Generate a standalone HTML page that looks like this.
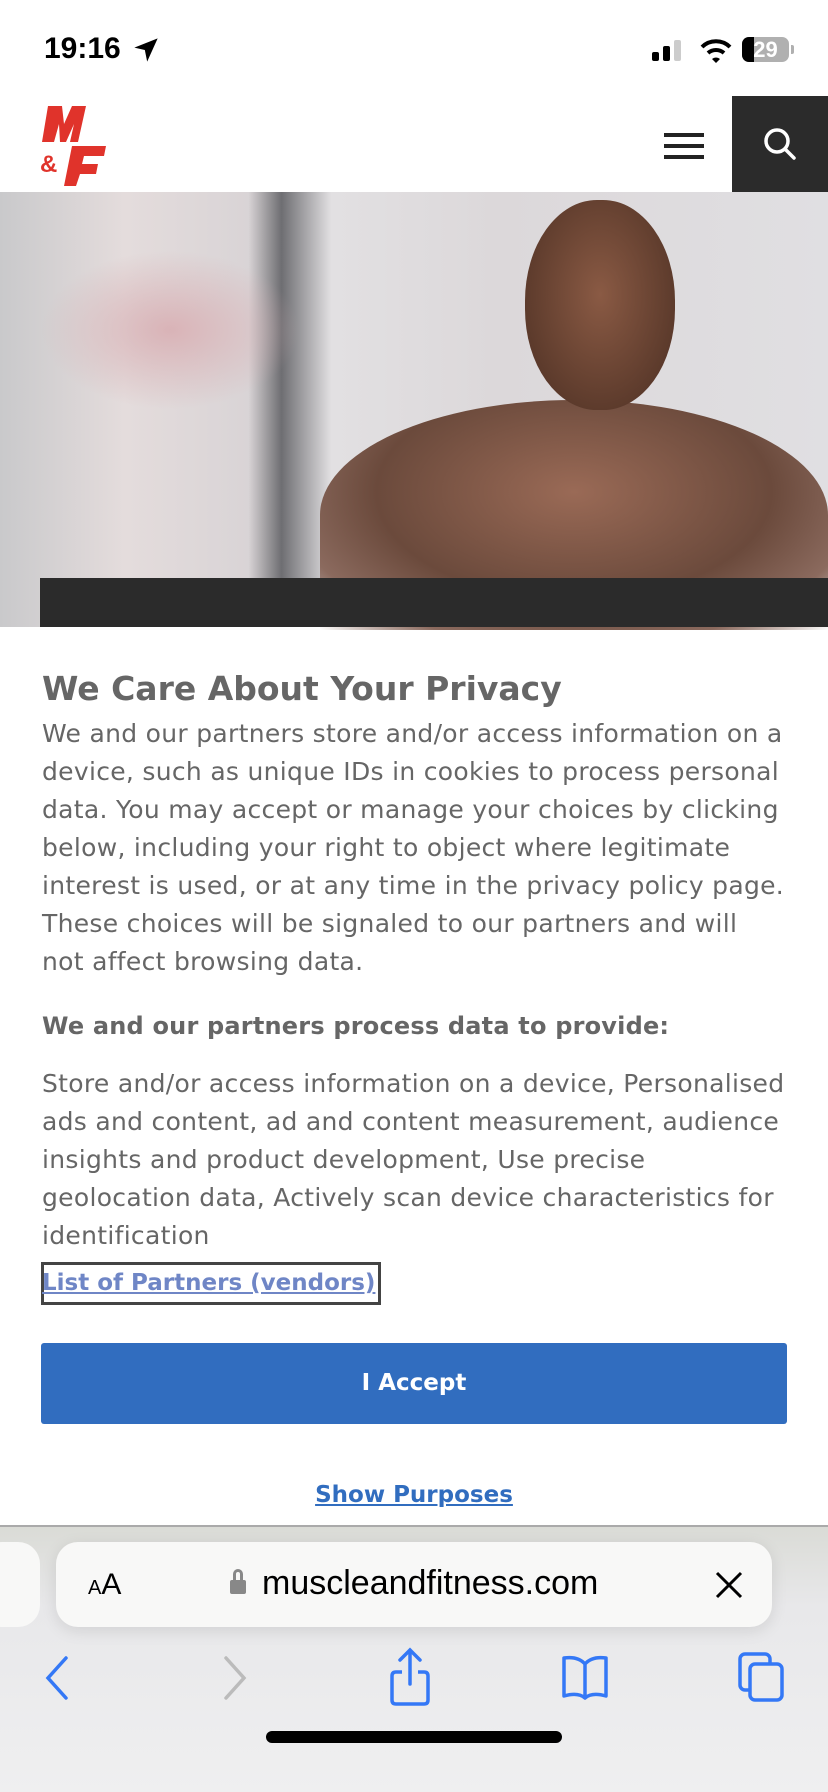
<!DOCTYPE html>
<html><head><meta charset="utf-8"><style>
*{margin:0;padding:0;box-sizing:border-box}
body{width:828px;height:1792px;position:relative;overflow:hidden;background:#fff;font-family:"Liberation Sans",sans-serif}
.abs{position:absolute}
.p{color:#666;font-family:"DejaVu Sans",sans-serif;font-size:25px;letter-spacing:0.3px;line-height:38px;white-space:nowrap}
</style></head><body>
<div class="abs" style="left:44px;top:32px;font-size:30px;font-weight:bold;color:#000">19:16</div>
<svg class="abs" style="left:132px;top:36px" width="28" height="28" viewBox="0 0 24 24"><path d="M22 2 L2 10 L11 12 L13 22 Z" fill="#000"/></svg>
<div class="abs" style="left:652px;top:52px;width:7px;height:9px;background:#000;border-radius:2px"></div>
<div class="abs" style="left:663px;top:46px;width:7px;height:15px;background:#000;border-radius:2px"></div>
<div class="abs" style="left:674px;top:40px;width:7px;height:21px;background:#ccc;border-radius:2px"></div>
<svg class="abs" style="left:700px;top:38px" width="32" height="26" viewBox="0 0 32 26"><path d="M2 9 A20 20 0 0 1 30 9" stroke="#000" stroke-width="4" fill="none"/><path d="M8 15 A12 12 0 0 1 24 15" stroke="#000" stroke-width="4" fill="none"/><path d="M12 21 L16 25 L20 21 A6 6 0 0 0 12 21Z" fill="#000"/></svg>
<div class="abs" style="left:742px;top:37px;width:47px;height:25px;border-radius:7px;background:#b0b0b0;overflow:hidden"><div style="width:12px;height:100%;background:#000"></div><div class="abs" style="left:0;top:0;width:47px;text-align:center;color:#fff;font-weight:bold;font-size:22px;line-height:25px">29</div></div>
<div class="abs" style="left:791px;top:45px;width:3px;height:9px;background:#b0b0b0;border-radius:0 2px 2px 0"></div>

<svg class="abs" style="left:38px;top:104px" width="70" height="82" viewBox="0 0 70 82">
<path d="M10 2 H24 L26 20 L34 2 H48 L40 38 H32 L36 20 L28 38 H22 L21 20 L16 38 H4 Z" fill="#e0332b"/>
<path d="M34 42 H68 L66 52 H46 L44 60 H60 L58 70 H42 L38 82 H26 Z" fill="#e0332b"/>
<text x="2" y="68" font-family="Liberation Sans" font-weight="bold" font-size="24" fill="#e0332b">&amp;</text>
</svg>
<div class="abs" style="left:664px;top:133px;width:40px;height:4px;background:#222"></div>
<div class="abs" style="left:664px;top:144px;width:40px;height:4px;background:#222"></div>
<div class="abs" style="left:664px;top:155px;width:40px;height:4px;background:#222"></div>
<div class="abs" style="left:732px;top:96px;width:96px;height:96px;background:#2b2b2b"></div>
<svg class="abs" style="left:762px;top:126px" width="36" height="36" viewBox="0 0 36 36"><circle cx="15" cy="15" r="11" stroke="#fff" stroke-width="3.5" fill="none"/><path d="M23 23 L32 32" stroke="#fff" stroke-width="3.5" stroke-linecap="round"/></svg>

<div class="abs" style="left:0;top:192px;width:828px;height:435px;background:linear-gradient(90deg,#c9c9cb 0%,#e4dcdc 15%,#d9d4d6 30%,#6e6e72 34%,#e2e0e2 40%,#dcd8da 60%,#e0dfe2 100%)"></div>
<div class="abs" style="left:40px;top:250px;width:260px;height:160px;background:radial-gradient(ellipse,#d9b3b7 0%,rgba(220,200,200,0) 70%)"></div>
<div class="abs" style="left:320px;top:400px;width:508px;height:230px;border-radius:50% 50% 0 0;background:radial-gradient(ellipse at 50% 40%,#9a6a56 0%,#6b4a3c 55%,#8b6a5e 80%,rgba(200,190,190,0) 100%)"></div>
<div class="abs" style="left:525px;top:200px;width:150px;height:210px;border-radius:48%;background:radial-gradient(ellipse at 50% 45%,#8a5a44,#4a2e22)"></div>
<div class="abs" style="left:40px;top:578px;width:788px;height:49px;background:#2b2b2b"></div>

<div class="abs" style="left:42px;top:669px;font-family:'DejaVu Sans',sans-serif;font-size:33px;font-weight:bold;color:#666">We Care About Your Privacy</div>
<div class="abs p" style="left:42px;top:715px">We and our partners store and/or access information on a<br>device, such as unique IDs in cookies to process personal<br>data. You may accept or manage your choices by clicking<br>below, including your right to object where legitimate<br>interest is used, or at any time in the privacy policy page.<br>These choices will be signaled to our partners and will<br>not affect browsing data.</div>
<div class="abs p" style="left:42px;top:1007px;font-weight:bold;font-size:24px;letter-spacing:0.2px">We and our partners process data to provide:</div>
<div class="abs p" style="left:42px;top:1065px">Store and/or access information on a device, Personalised<br>ads and content, ad and content measurement, audience<br>insights and product development, Use precise<br>geolocation data, Actively scan device characteristics for<br>identification</div>
<div class="abs" style="left:41px;top:1262px;width:340px;height:43px;border:3px solid #444"></div>
<div class="abs" style="left:42px;top:1270px;font-family:'DejaVu Sans',sans-serif;font-size:23px;font-weight:bold;color:#6f86c6;text-decoration:underline">List of Partners (vendors)</div>
<div class="abs" style="left:41px;top:1343px;width:746px;height:81px;background:#316dbf;border-radius:3px;color:#fff;font-weight:bold;font-family:'DejaVu Sans',sans-serif;font-size:23px;text-align:center;line-height:81px">I Accept</div>
<div class="abs" style="left:0;top:1482px;width:828px;text-align:center;font-family:'DejaVu Sans',sans-serif;font-size:23px;font-weight:bold;color:#316dbf;text-decoration:underline">Show Purposes</div>

<div class="abs" style="left:0;top:1525px;width:828px;height:267px;background:linear-gradient(180deg,#dadbd6 0%,#e8e8ea 30%,#efeff0 100%);border-top:2px solid #aaa"></div>
<div class="abs" style="left:-20px;top:1542px;width:60px;height:85px;background:#f8f8f7;border-radius:22px"></div>
<div class="abs" style="left:56px;top:1542px;width:716px;height:85px;background:#f8f8f7;border-radius:22px;box-shadow:0 4px 16px rgba(0,0,0,.1)"></div>
<div class="abs" style="left:88px;top:1568px;color:#000"><span style="font-size:20px">A</span><span style="font-size:30px">A</span></div>
<div class="abs" style="left:230px;top:1580px;width:16px;height:14px;background:#888;border-radius:2px"></div>
<div class="abs" style="left:233px;top:1569px;width:10px;height:14px;border:3px solid #888;border-radius:6px 6px 0 0"></div>
<div class="abs" style="left:262px;top:1564px;font-size:34px;color:#000">muscleandfitness.com</div>
<svg class="abs" style="left:714px;top:1570px" width="30" height="30" viewBox="0 0 30 30"><path d="M3 3 L27 27 M27 3 L3 27" stroke="#000" stroke-width="3"/></svg>
<svg class="abs" style="left:44px;top:1656px" width="26" height="44" viewBox="0 0 26 44"><path d="M22 2 L4 22 L22 42" stroke="#3478f6" stroke-width="3.5" fill="none" stroke-linecap="round"/></svg>
<svg class="abs" style="left:222px;top:1656px" width="26" height="44" viewBox="0 0 26 44"><path d="M4 2 L22 22 L4 42" stroke="#bbb" stroke-width="3.5" fill="none" stroke-linecap="round"/></svg>
<svg class="abs" style="left:388px;top:1646px" width="44" height="62" viewBox="0 0 44 62"><path d="M22 4 V38 M12 14 L22 4 L32 14" stroke="#3478f6" stroke-width="3.5" fill="none" stroke-linecap="round"/><path d="M14 26 H8 Q4 26 4 30 V54 Q4 58 8 58 H36 Q40 58 40 54 V30 Q40 26 36 26 H30" stroke="#3478f6" stroke-width="3.5" fill="none"/></svg>
<svg class="abs" style="left:560px;top:1654px" width="50" height="46" viewBox="0 0 50 46"><path d="M25 10 Q18 2 4 4 V42 Q18 38 25 44 Q32 38 46 42 V4 Q32 2 25 10 Z M25 10 V44" stroke="#3478f6" stroke-width="3.5" fill="none" stroke-linejoin="round"/></svg>
<svg class="abs" style="left:736px;top:1650px" width="50" height="54" viewBox="0 0 50 54"><rect x="4" y="4" width="30" height="36" rx="5" stroke="#3478f6" stroke-width="3.5" fill="none"/><rect x="14" y="14" width="32" height="36" rx="5" stroke="#3478f6" stroke-width="3.5" fill="#ececed"/></svg>
<div class="abs" style="left:266px;top:1731px;width:296px;height:12px;background:#000;border-radius:6px"></div>
</body></html>
